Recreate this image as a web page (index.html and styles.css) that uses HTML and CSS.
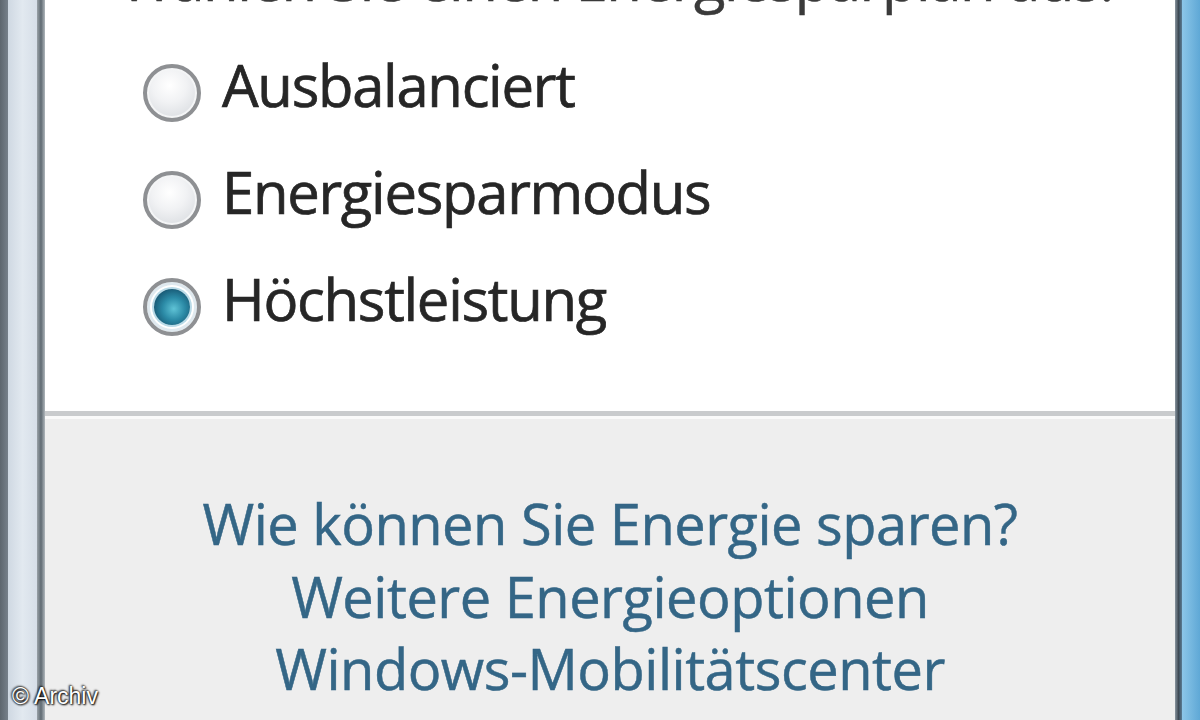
FILE: index.html
```html
<!DOCTYPE html>
<html lang="de">
<head>
<meta charset="utf-8">
<title>Energiesparplan</title>
<link rel="stylesheet" href="styles.css">
</head>
<body>
<div class="screen">
  <div class="frame-left">
    <div class="fl-dark"></div>
    <div class="fl-light"></div>
    <div class="fl-line"></div>
  </div>
  <div class="panel">
    <div class="top">
      <div class="heading">Wählen Sie einen Energiesparplan aus:</div>
      <div class="options">
        <div class="row">
          <div class="radio"></div>
          <div class="label">Ausbalanciert</div>
        </div>
        <div class="row">
          <div class="radio"></div>
          <div class="label">Energiesparmodus</div>
        </div>
        <div class="row">
          <div class="radio checked"><div class="dot"></div></div>
          <div class="label">Höchstleistung</div>
        </div>
      </div>
    </div>
    <div class="sep"></div>
    <div class="bottom">
      <div class="link">Wie können Sie Energie sparen?</div>
      <div class="link">Weitere Energieoptionen</div>
      <div class="link">Windows-Mobilitätscenter</div>
    </div>
  </div>
  <div class="frame-right">
    <div class="fr-line"></div>
    <div class="fr-blue"></div>
  </div>
  <div class="watermark">© Archiv</div>
</div>
</body>
</html>
```
FILE: styles.css
```css
html, body {
  margin: 0;
  padding: 0;
  width: 1200px;
  height: 720px;
  overflow: hidden;
}

.screen {
  position: relative;
  display: flex;
  width: 1200px;
  height: 720px;
  font-family: "Open Sans", "Noto Sans", sans-serif;
}

.frame-left {
  display: flex;
  flex: 0 0 45px;
}
.fl-dark {
  width: 8px;
  background: linear-gradient(90deg, #5d666e, #76808a);
}
.fl-light {
  width: 29px;
  background: linear-gradient(90deg, #cfd8e2, #e2e9f0 50%, #d6dee8);
}
.fl-line {
  width: 8px;
  background: linear-gradient(90deg, #9aa2a8, #5f6a72 50%, #b0b7bc);
}

.frame-right {
  display: flex;
  flex: 0 0 25px;
}
.fr-line {
  width: 7px;
  background: linear-gradient(90deg, #8a96a0, #3e4a55 50%, #5a7c94);
}
.fr-blue {
  flex: 1;
  background: linear-gradient(90deg, #8cc6e8, #5fa8d6);
}

.panel {
  flex: 1;
  display: flex;
  flex-direction: column;
  background: #eeeeee;
  overflow: hidden;
}

.top {
  height: 411px;
  background: #ffffff;
  overflow: hidden;
}

.heading {
  margin-top: -49px;
  height: 55px;
  line-height: 55px;
  padding-left: 75px;
  font-size: 58px;
  letter-spacing: -1.4px;
  color: #3a3a3a;
  -webkit-text-stroke: 0.5px #3a3a3a;
  white-space: nowrap;
}

.options {
  margin-top: 25px;
  padding-left: 98px;
}

.row {
  display: flex;
  align-items: flex-start;
  height: 107px;
}

.radio {
  box-sizing: border-box;
  width: 58px;
  height: 58px;
  margin-top: 33px;
  border-radius: 50%;
  border: 4px solid #8e9093;
  background: radial-gradient(circle at 45% 35%, #ffffff 0%, #f1f2f4 40%, #d9dce0 85%, #e9eaec 100%);
  box-shadow: inset 0 0 0 2px #f4f5f6;
  display: flex;
  align-items: center;
  justify-content: center;
}

.radio.checked {
  background: #ffffff;
  box-shadow: inset 0 0 0 3px #dfe9ef;
}

.dot {
  width: 36px;
  height: 36px;
  border-radius: 50%;
  background: radial-gradient(circle at 55% 55%, #5fc3d6 0%, #2b8aa6 40%, #14506c 80%, #0f3e56 100%);
  box-shadow: 0 0 0 2px #b9dbe8;
}

.label {
  margin-left: 21px;
  line-height: 107px;
  font-size: 58px;
  letter-spacing: -1.3px;
  color: #262626;
  -webkit-text-stroke: 0.7px #262626;
  white-space: nowrap;
}

.sep {
  height: 5px;
  background: #c9cbcd;
  border-bottom: 3px solid #fafafa;
}

.bottom {
  padding-top: 68px;
  text-align: center;
}

.link {
  font-size: 56px;
  letter-spacing: -0.5px;
  line-height: 72.5px;
  color: #346686;
  -webkit-text-stroke: 0.5px #346686;
  white-space: nowrap;
}

.watermark {
  position: absolute;
  left: 12px;
  bottom: 10px;
  font-family: "Liberation Sans", Arial, sans-serif;
  font-size: 23px;
  color: #ffffff;
  text-shadow: 0 0 2px #000, 1px 1px 2px #000, -1px -1px 2px #333;
}
```
